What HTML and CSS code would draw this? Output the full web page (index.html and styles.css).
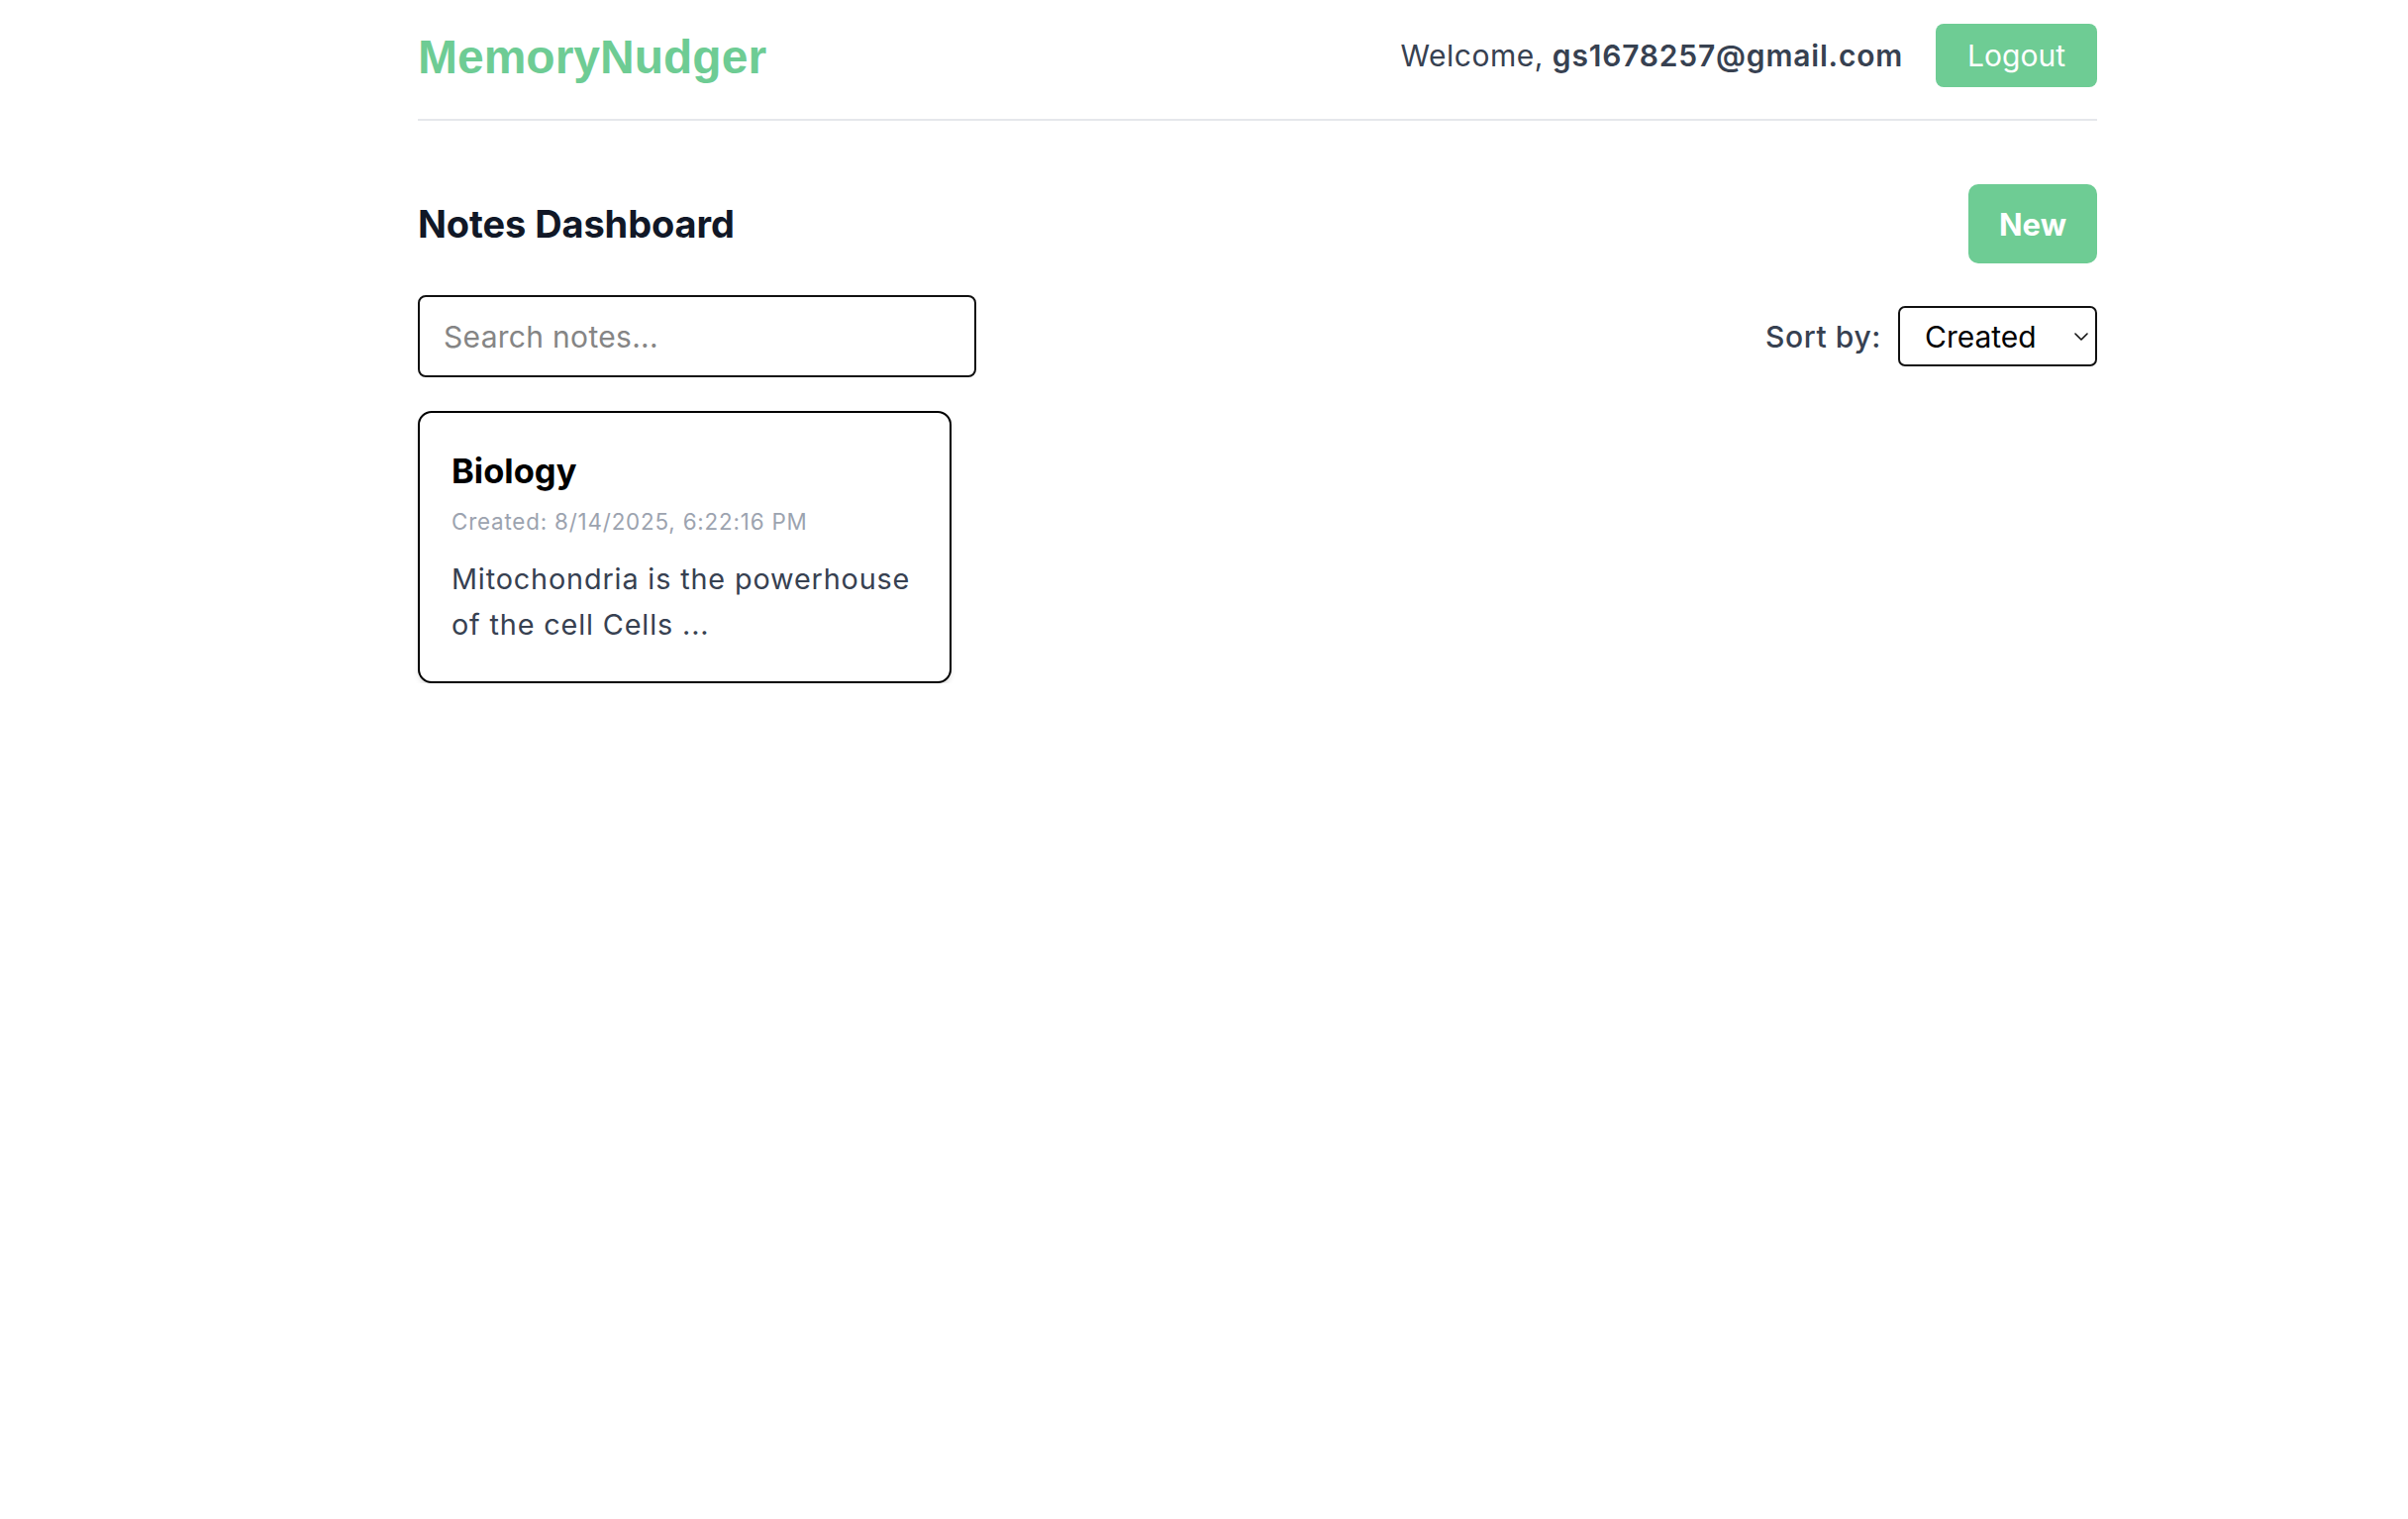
FILE: index.html
```html
<!DOCTYPE html>
<html lang="en">
<head>
<meta charset="utf-8">
<title>MemoryNudger</title>
<link rel="stylesheet" href="styles.css">
</head>
<body>
<div class="page">
  <header class="topbar">
    <div class="logo">MemoryNudger</div>
    <div class="user">
      <span class="welcome">Welcome, <strong>gs1678257@gmail.com</strong></span>
      <button class="btn btn-logout">Logout</button>
    </div>
  </header>
  <main class="main">
    <div class="title-row">
      <h2 class="title">Notes Dashboard</h2>
      <button class="btn btn-new">New</button>
    </div>
    <div class="tools-row">
      <input class="search" type="text" placeholder="Search notes...">
      <div class="sort">
        <label class="sort-label" for="sort">Sort by:</label>
        <div class="select-wrap">
          <select id="sort" class="select">
            <option>Created</option>
            <option>Updated</option>
            <option>Title</option>
          </select>
          <svg class="chev" width="14" height="8" viewBox="0 0 14 8"><path d="M1 1l6 6 6-6" fill="none" stroke="#111" stroke-width="1.6" stroke-linecap="round" stroke-linejoin="round"/></svg>
        </div>
      </div>
    </div>
    <div class="notes">
      <article class="card">
        <h3 class="card-title">Biology</h3>
        <p class="card-date">Created: 8/14/2025, 6:22:16 PM</p>
        <p class="card-body">Mitochondria is the powerhouse of the cell Cells ...</p>
      </article>
    </div>
  </main>
</div>
</body>
</html>
```
FILE: styles.css
```css
* { box-sizing: border-box; }
html, body { margin: 0; padding: 0; background: #fff; }
body { font-family: Inter, "Noto Sans", "Liberation Sans", sans-serif; color: #111827; }

.page { width: 1696px; margin-left: 422px; }

.topbar {
  display: flex;
  justify-content: space-between;
  align-items: center;
  padding: 24px 0 32px;
  border-bottom: 2px solid #e5e7eb;
}
.logo {
  font-family: "Liberation Sans", Arial, sans-serif;
  font-weight: 700;
  font-size: 48px;
  color: #6ecc94;
  line-height: 60px;
  padding-top: 4px;
}
.user { display: flex; align-items: center; gap: 33px; }
.welcome { font-size: 30px; color: #374151; letter-spacing: 0.5px; }
.welcome strong { font-weight: 600; letter-spacing: 0.8px; }

.btn {
  font-family: Inter, "Noto Sans", sans-serif;
  background: #6ecc94;
  color: #fff;
  border: none;
  cursor: pointer;
}
.btn-logout {
  height: 64px;
  padding: 0 32px;
  font-size: 30px;
  border-radius: 8px;
}
.btn-new {
  height: 80px;
  width: 130px;
  font-size: 31px;
  font-weight: 700;
  border-radius: 10px;
}

.main { padding-top: 64px; }
.title-row { display: flex; justify-content: space-between; align-items: center; }
.title { margin: 0; font-size: 38px; font-weight: 700; color: #111827; letter-spacing: -0.1px; }

.tools-row {
  display: flex;
  justify-content: space-between;
  align-items: center;
  margin-top: 32px;
}
.search {
  width: 564px;
  height: 83px;
  border: 2px solid #111;
  border-radius: 8px;
  padding: 0 24px;
  font-family: Inter, "Noto Sans", sans-serif;
  font-size: 30px;
  letter-spacing: 0.3px;
  color: #111;
  outline: none;
}
.search::placeholder { color: #858585; }

.sort { display: flex; align-items: center; gap: 17px; }
.sort-label { font-size: 30px; font-weight: 500; color: #374151; letter-spacing: 0.6px; }
.select-wrap { position: relative; }
.select {
  appearance: none;
  -webkit-appearance: none;
  width: 201px;
  height: 61px;
  border: 2px solid #111;
  border-radius: 7px;
  background: #fff;
  padding: 0 0 0 25px;
  font-family: Inter, "Noto Sans", sans-serif;
  font-size: 30px;
  color: #000;
  outline: none;
}
.chev { position: absolute; right: 9px; top: 27px; }

.notes {
  display: grid;
  grid-template-columns: repeat(3, 1fr);
  gap: 40px;
  margin-top: 34px;
}
.card {
  border: 2px solid #000;
  border-radius: 14px;
  padding: 33px 32px 33px;
  box-shadow: 0 4px 6px -1px rgba(0,0,0,0.1), 0 2px 4px -2px rgba(0,0,0,0.1);
  background: #fff;
}
.card-title { margin: 0; font-size: 34.5px; font-weight: 700; color: #000; line-height: 52px; }
.card-date { margin: 9px 0 0; font-size: 22.4px; color: #9ca3af; line-height: 32px; letter-spacing: 0.8px; }
.card-body { margin: 18.6px 0 0; font-size: 28.8px; line-height: 46.8px; color: #374151; letter-spacing: 0.85px; }
```
